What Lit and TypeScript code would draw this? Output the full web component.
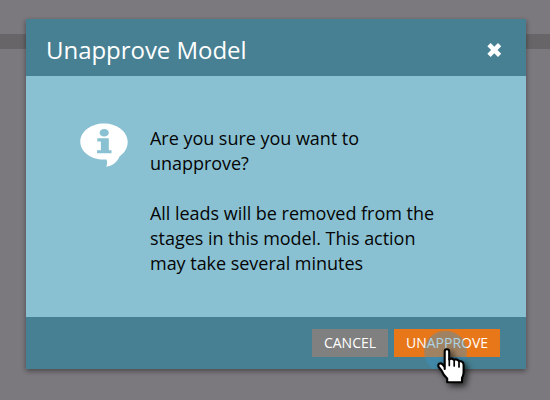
import { LitElement, html, css } from "lit";
import { customElement } from "lit/decorators.js";

@customElement("app-root")
export class AppRoot extends LitElement {
  static styles = css`
    :host {
      display: block;
      position: relative;
      box-sizing: border-box;
      width: 550px;
      height: 400px;
      padding: 19px 24px 31px 26px;
      overflow: hidden;
      background: linear-gradient(#7b797e 34px, #676567 34px, #676567 49px, #7b797e 49px);
      font-family: "Open Sans", "Noto Sans", sans-serif;
    }
    .dialog {
      display: flex;
      flex-direction: column;
      width: 500px;
      height: 350px;
      background: #89c1d3;
      box-shadow: 0 2px 5px rgba(0, 0, 0, 0.42);
    }
    .header {
      display: flex;
      align-items: center;
      justify-content: space-between;
      box-sizing: border-box;
      height: 57px;
      padding: 4px 24px 0 20px;
      background: #478092;
      color: #fff;
    }
    .title {
      margin: 0;
      font-size: 24px;
      font-weight: 400;
      letter-spacing: -0.04px;
      line-height: 33px;
    }
    .close {
      display: block;
      width: 16px;
      height: 16px;
    }
    .body {
      display: flex;
      flex: 1;
      gap: 22px;
      padding: 47px 80px 0 54px;
    }
    .info {
      flex: none;
      width: 48px;
      height: 46px;
    }
    .message {
      padding-top: 3px;
      color: #050505;
      font-size: 18px;
      letter-spacing: -0.03px;
      line-height: 25px;
    }
    .message p {
      margin: 0 0 25px;
    }
    .footer {
      display: flex;
      justify-content: flex-end;
      gap: 6px;
      box-sizing: border-box;
      height: 52px;
      padding: 12px 26px 12px 0;
      background: #478092;
    }
    .button {
      box-sizing: border-box;
      height: 28px;
      padding: 0;
      border: 0;
      background: #808080;
      color: #fff;
      font: 14px/28px "Open Sans", "Noto Sans", sans-serif;
      text-align: center;
      width: 76px;
    }
    .primary {
      width: 106px;
      background: #e8771a;
    }
    .pointer {
      position: absolute;
      left: 420px;
      top: 325px;
      width: 65px;
      height: 70px;
      pointer-events: none;
    }
    .hand {
      filter: drop-shadow(3px 3px 3px rgba(0, 0, 0, 0.7));
    }
  `;

  render() {
    return html`
      <section class="dialog">
        <header class="header">
          <h1 class="title">Unapprove Model</h1>
          <svg class="close" viewBox="0 0 16 16">
            <path d="M3 2.700 13.600 13.300M13.600 2.700 3 13.300" stroke="#fff" stroke-width="4.600" />
          </svg>
        </header>
        <div class="body">
          <svg class="info" viewBox="0 0 48 46">
            <path
              d="M24 .4C11 .4.3 8.500.3 18.500.3 28.800 10.500 36.500 24 36.500H26.500C27.600 39 27.300 41.800 26 43.800 32 43 37.500 39 39.500 33.500 44.500 30 47.700 25 47.700 18.800 47.700 8.500 37 .4 24 .4Z"
              fill="#fff"
            />
            <ellipse cx="24.200" cy="9.800" rx="4.600" ry="3.800" fill="#89c1d3" />
            <path d="M17.300 15.200h11.500V27.300h2.700v3H17v-3h3.900v-8.800h-3.600Z" fill="#89c1d3" />
          </svg>
          <div class="message">
            <p>Are you sure you want to<br />unapprove?</p>
            <p>All leads will be removed from the<br />stages in this model. This action<br />may take several minutes</p>
          </div>
        </div>
        <footer class="footer">
          <button class="button">CANCEL</button>
          <button class="button primary">UNAPPROVE</button>
        </footer>
      </section>
      <svg class="pointer" viewBox="0 0 65 70">
        <defs>
          <radialGradient id="halo">
            <stop offset="0" stop-color="#3a92c6" stop-opacity=".42" />
            <stop offset=".9" stop-color="#3a92c6" stop-opacity=".42" />
            <stop offset="1" stop-color="#3a92c6" stop-opacity=".32" />
          </radialGradient>
          <clipPath id="dialog-area"><path d="M0 0h65v44H0Z" /></clipPath>
        </defs>
        <circle cx="25.500" cy="27" r="21.500" fill="url(#halo)" clip-path="url(#dialog-area)" />
        <g class="hand">
          <path
            d="M24.700 44V26.500Q24.700 24.300 26.900 24.300 29.200 24.300 29.200 26.500V34.500Q31 32.700 34 34.800 36.500 33.500 39 36 43.600 36 43.600 40V47.500Q43.600 50 42 53V57.200H27.200V53.500Q23.500 50.500 21.500 45.500L18.700 42Q17.700 39.700 19.200 38.600 21 37.800 22.700 39.500L24.700 42"
            fill="#fff"
            stroke="#000"
            stroke-width="2.100"
            stroke-linejoin="round"
            stroke-linecap="round"
          />
          <path
            d="M29.300 34V40.500M34.200 35.500V41M39 36.500V42"
            fill="none"
            stroke="#000"
            stroke-width="1.700"
            stroke-linecap="round"
          />
        </g>
      </svg>
    `;
  }
}
